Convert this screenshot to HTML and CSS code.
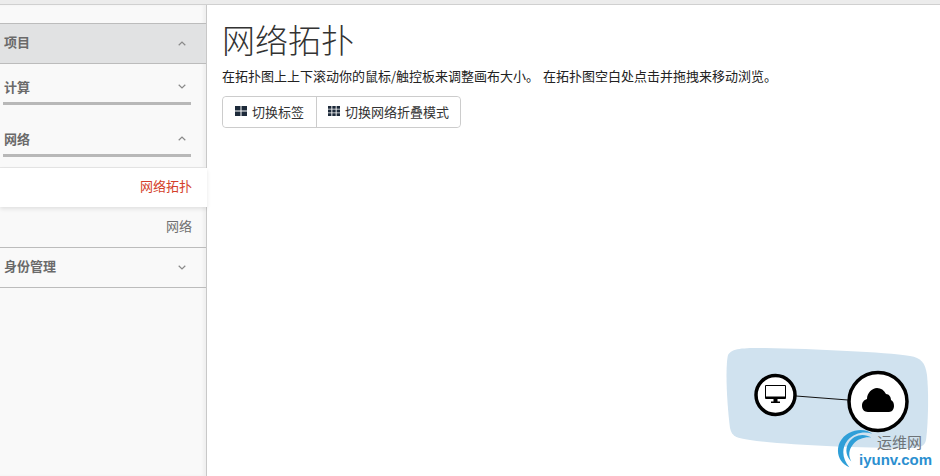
FILE: index.html
```html
<!DOCTYPE html>
<html lang="zh">
<head>
    <meta charset="UTF-8">
    <title>网络拓扑</title>
    <link rel="stylesheet" href="styles.css">
</head>
<body>
    <div class="topbar"></div>
    <div class="layout">
        <div class="sidebar">
            <div class="nav-head nav-head-open">
                <span>项目</span>
                <svg class="chevron" viewBox="0 0 8 5"><path d="M.7 4.200 4 1l3.300 3.200"/></svg>
            </div>
            <div class="nav-group">
                <div class="nav-title">
                    <span>计算</span>
                    <svg class="chevron" viewBox="0 0 8 5"><path d="M.7.8 4 4 7.300.8"/></svg>
                </div>
            </div>
            <div class="nav-group nav-group-second">
                <div class="nav-title">
                    <span>网络</span>
                    <svg class="chevron" viewBox="0 0 8 5"><path d="M.7 4.200 4 1l3.300 3.200"/></svg>
                </div>
            </div>
            <div class="nav-item nav-item-active">网络拓扑</div>
            <div class="nav-item">网络</div>
            <div class="nav-head">
                <span>身份管理</span>
                <svg class="chevron" viewBox="0 0 8 5"><path d="M.7.8 4 4 7.300.8"/></svg>
            </div>
        </div>
        <div class="content">
            <h1>网络拓扑</h1>
            <p class="help">在拓扑图上上下滚动你的鼠标/触控板来调整画布大小。 在拓扑图空白处点击并拖拽来移动浏览。</p>
            <div class="btn-group">
                <button class="btn">
                    <svg class="btn-icon" viewBox="0 0 12 10"><path d="M0 0h5.500v4.500H0zM6.500 0H12v4.500H6.500zM0 5.500h5.500V10H0zM6.500 5.500H12V10H6.500z"/></svg>
                    切换标签
                </button>
                <button class="btn">
                    <svg class="btn-icon" viewBox="0 0 12 10"><path d="M0 0h3.400v2.800H0zM4.300 0h3.400v2.800H4.300zM8.600 0H12v2.800H8.600zM0 3.600h3.400v2.800H0zM4.300 3.600h3.400v2.800H4.300zM8.600 3.600H12v2.800H8.600zM0 7.200h3.400V10H0zM4.300 7.200h3.400V10H4.300zM8.600 7.200H12V10H8.600z"/></svg>
                    切换网络折叠模式
                </button>
            </div>
        </div>
    </div>

    <!-- 拓扑图 -->
    <svg class="topology" viewBox="0 0 225 136" width="225" height="136">
        <path class="topo-bg" d="M13 15C17 8 28 8 50 8c50 1 120 4 145 8 11 2 15 6 17 19 2 20 1 50-1 65-1 6-6 8-16 8-55 0-125-3-160-8-13-2-18-3-20-12C12 65 10 28 13 15z"/>
        <line class="topo-link" x1="81" y1="56" x2="133" y2="60"/>
        <circle class="topo-node" cx="60.500" cy="55" r="19.500"/>
        <circle class="topo-node" cx="163" cy="61.500" r="29"/>
        <rect x="50" y="45" width="21" height="14" rx="1" fill="#000"/>
        <rect x="51" y="46" width="19" height="10.500" fill="#fff"/>
        <path d="M58.500 59h4v2.500h-4zM56 61.500h9V63h-9z" fill="#000"/>
        <path d="M153 72c-4 0-6-3-6-6 0-4 2-6 5-7 0-6 5-11 10-11 4 0 7 2 9 6 3 0 5 3 5 6 2 1 3 3 3 6 0 3-2 6-5 6z" fill="#000"/>
    </svg>
    <div class="watermark">
        <svg class="wm-swirl" viewBox="0 0 44 44"><path d="M38 6C30-1 11 1 4 15c-5 11 0 22 10 26C7 33 5 22 12 13 19 5 30 3 38 6z"/><path d="M37 10C29 5 18 7 13 16c-4 7-2 14 3 19-3-6-3-12 2-18 5-6 13-8 19-7z"/></svg>
        <span class="wm-cn">运维网</span>
        <span class="wm-en">iyunv.com</span>
    </div>
</body>
</html>
```

FILE: styles.css
```css
body {
    margin: 0;
    height: 476px;
    overflow: hidden;
    position: relative;
    background-color: #fff;
    color: #222;
    font-family: "Noto Sans CJK SC", "Liberation Sans", sans-serif;
    font-size: 13px;
}

.topbar {
    height: 4px;
    background-color: #ececec;
    border-bottom: 1px solid #d0d0d0;
}

.layout {
    display: flex;
    height: 471px;
}

.sidebar {
    width: 206px;
    flex-shrink: 0;
    padding-top: 18px;
    background-color: #f9f9f9;
    border-right: 1px solid #c8c8c8;
    box-shadow: inset -3px 0 3px rgba(0, 0, 0, 0.04);
}

.nav-head {
    height: 35px;
    display: flex;
    align-items: center;
    justify-content: space-between;
    padding: 0 20px 4px 4px;
    border-bottom: 1px solid #bcbcbc;
    color: #6a6a6a;
    font-weight: 700;
}

.nav-head .chevron {
    margin-top: 4px;
}

.nav-head-open {
    background-color: #e1e2e3;
    border-top: 1px solid #bcbcbc;
}

.nav-group {
    padding: 0 15px 0 3px;
}

.nav-title {
    height: 32px;
    display: flex;
    align-items: center;
    justify-content: space-between;
    padding: 6px 5px 0 1px;
    border-bottom: 3px solid #b8b8b8;
    color: #6a6a6a;
    font-weight: 700;
}

.nav-group-second {
    margin-top: 11px;
    padding-bottom: 10px;
    border-bottom: 1px solid #e6e6e6;
}

.nav-group-second .nav-title {
    height: 31px;
    padding-top: 7px;
}

.chevron {
    width: 8px;
    height: 5px;
    fill: none;
    stroke: #8a8a8a;
    stroke-width: 1.200;
}

.nav-item {
    height: 35px;
    display: flex;
    align-items: center;
    justify-content: flex-end;
    padding: 0 14px 4px 0;
    color: #6f6f6f;
}

.nav-item + .nav-item {
    height: 36px;
    border-bottom: 1px solid #bcbcbc;
}

.nav-item-active {
    position: relative;
    width: 192px;
    padding-right: 15px;
    background-color: #fff;
    color: #d43f2a;
    box-shadow: 0 2px 4px rgba(0, 0, 0, 0.1);
}

.content {
    flex: 1;
    padding-left: 15px;
}

h1 {
    margin: 12px 0 0;
    font-size: 33px;
    font-weight: 300;
    line-height: 44px;
    color: #333;
}

.help {
    margin: 6px 0 0;
    font-size: 13px;
    line-height: 18px;
    word-spacing: 1px;
    white-space: nowrap;
    color: #222;
}

.btn-group {
    display: inline-flex;
    margin-top: 11px;
    border: 1px solid #ccc;
    border-radius: 4px;
}

.btn {
    display: flex;
    align-items: center;
    gap: 5px;
    height: 30px;
    padding: 0 12px 2px;
    background-color: #fff;
    border: none;
    font-family: inherit;
    font-size: 13px;
    color: #333;
    border-radius: 4px;
}

.btn + .btn {
    padding: 0 11px 2px;
    border-left: 1px solid #ccc;
    border-radius: 0 4px 4px 0;
}

.btn-icon {
    width: 12px;
    height: 10px;
    fill: #1d2a3a;
}

.topology {
    position: absolute;
    left: 715px;
    top: 340px;
}

.topo-bg {
    fill: #d0e2ef;
}

.topo-link {
    stroke: #111;
    stroke-width: 1;
}

.topo-node {
    fill: #fff;
    stroke: #000;
    stroke-width: 3.500;
}

.watermark {
    position: absolute;
    left: 836px;
    top: 428px;
    width: 104px;
    height: 46px;
}

.wm-swirl {
    position: absolute;
    left: 0;
    top: 0;
    width: 42px;
    height: 42px;
    fill: #2f9fd8;
}

.wm-cn {
    position: absolute;
    left: 41px;
    top: 4px;
    font-size: 15px;
    line-height: 20px;
    color: #6e7478;
}

.wm-en {
    position: absolute;
    left: 23px;
    top: 22px;
    font-family: "Liberation Sans", sans-serif;
    font-size: 15px;
    font-weight: 700;
    line-height: 20px;
    color: #2b8fd0;
}
```
